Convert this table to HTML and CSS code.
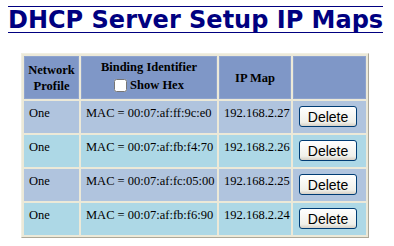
FILE: index.html
```html
<!DOCTYPE html>
<html>
<head>
    <title>DHCP Server Setup IP Maps</title>
    <link rel="stylesheet" href="styles.css">
</head>
<body>
    <h1 class="page-title">DHCP Server Setup IP Maps</h1>

    <table class="map-table">
        <tr>
            <th class="col-profile">Network<br>Profile</th>
            <th class="col-binding">Binding Identifier<br>
                <label class="hex-toggle"><input type="checkbox" id="showHex"> Show Hex</label>
            </th>
            <th class="col-ip">IP Map</th>
            <th class="col-action"></th>
        </tr>
        <tr class="row-odd">
            <td>One</td>
            <td>MAC = 00:07:af:ff:9c:e0</td>
            <td>192.168.2.27</td>
            <td><button type="button" class="delete-button">Delete</button></td>
        </tr>
        <tr class="row-even">
            <td>One</td>
            <td>MAC = 00:07:af:fb:f4:70</td>
            <td>192.168.2.26</td>
            <td><button type="button" class="delete-button">Delete</button></td>
        </tr>
        <tr class="row-odd">
            <td>One</td>
            <td>MAC = 00:07:af:fc:05:00</td>
            <td>192.168.2.25</td>
            <td><button type="button" class="delete-button">Delete</button></td>
        </tr>
        <tr class="row-even">
            <td>One</td>
            <td>MAC = 00:07:af:fb:f6:90</td>
            <td>192.168.2.24</td>
            <td><button type="button" class="delete-button">Delete</button></td>
        </tr>
    </table>
</body>
</html>
```

FILE: styles.css
```css
body {
    font-family: "Liberation Serif", "Times New Roman", serif;
    font-size: 12.5px;
    margin: 0;
    padding: 6px 8px;
    background-color: white;
    color: black;
}

.page-title {
    display: inline-block;
    margin: 0;
    padding: 1px 0 0 0;
    font-family: "DejaVu Sans", Verdana, sans-serif;
    font-size: 24px;
    font-weight: bold;
    line-height: 24px;
    color: #000080;
    border-top: 1px solid #000080;
    border-bottom: 1px solid #000080;
}

.map-table {
    margin: 20px 0 0 13px;
    width: 348px;
    table-layout: fixed;
    border-collapse: separate;
    border-spacing: 2px;
    background-color: #ece9d8;
    border: 1px solid;
    border-color: #f1efe2 #aca899 #aca899 #f1efe2;
}

.map-table th {
    background-color: #7f97c7;
    font-weight: bold;
    font-size: 12.5px;
    line-height: 16px;
    text-align: center;
    vertical-align: middle;
    height: 41px;
    padding: 0;
    border: 1px solid #8ea3cd;
    white-space: nowrap;
}

.map-table td {
    height: 26px;
    padding: 4px 4px 0 4px;
    line-height: 15px;
    vertical-align: top;
    border: 1px solid transparent;
    white-space: nowrap;
}

.col-profile { width: 53px; }
.col-binding { width: 134px; }
.col-ip { width: 70px; }

.row-odd td { background-color: #b0c4de; }
.row-even td { background-color: #add8e6; }

.hex-toggle {
    display: inline-flex;
    align-items: center;
    gap: 3px;
    margin-top: 2px;
}

.hex-toggle input {
    width: 13px;
    height: 13px;
    margin: 0;
}

.delete-button {
    font-family: "Liberation Sans", Tahoma, sans-serif;
    font-size: 14px;
    width: 58px;
    height: 21px;
    margin: 0 0 0 1px;
    padding: 0;
    color: black;
    background: linear-gradient(#ffffff, #f0f0ea 80%, #d6d0c5);
    border: 1px solid #003c74;
    border-radius: 3px;
}
```
